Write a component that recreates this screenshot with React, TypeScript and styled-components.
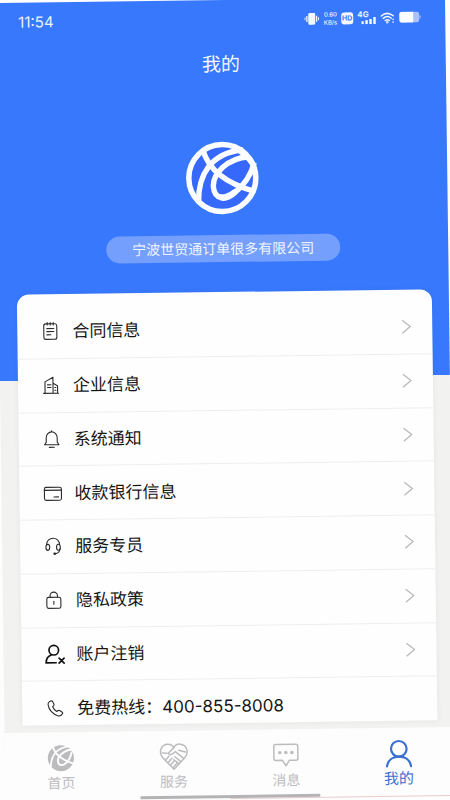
import React from "react";
import styled, { createGlobalStyle } from "styled-components";

const GlobalStyle = createGlobalStyle`
  *, *::before, *::after { box-sizing: border-box; }
  html, body { margin: 0; background: #fdfdfe; }
  body { font-family: "Inter", "Noto Sans CJK SC", sans-serif; color: #161616; }
  button { font: inherit; color: inherit; background: none; border: 0; padding: 0; margin: 0; cursor: pointer; }
  a { color: inherit; text-decoration: none; }
`;

const Viewport = styled.div`
  min-height: 100vh;
  overflow: hidden;
`;

/* The device screen lies slightly tilted on the white page. */
const Screen = styled.div`
  display: flex;
  flex-direction: column;
  width: 100%;
  height: calc(100vh - 1px);
  min-height: 640px;
  background: linear-gradient(#3778fd 378px, #f2f2f1 378px);
  transform: translate(-5px, 3px) rotate(-0.75deg);
  transform-origin: top left;
`;

const StatusBar = styled.header`
  display: flex;
  align-items: center;
  justify-content: space-between;
  height: 39px;
  padding: 0 24px 0 23px;
  color: #eef3ff;
`;

const Clock = styled.time`
  font-size: 15px;
  line-height: 20px;
`;

const StatusIcons = styled.div`
  display: flex;
  align-items: center;
  gap: 4px;
`;

const NetSpeed = styled.span`
  display: flex;
  flex-direction: column;
  align-items: center;
  font-size: 6px;
  line-height: 8px;
  font-weight: 500;
`;

const Title = styled.h1`
  margin: 0;
  padding-top: 12px;
  font-size: 19px;
  line-height: 28px;
  font-weight: 400;
  text-align: center;
  color: #f4f7ff;
`;

const Profile = styled.section`
  display: flex;
  flex-direction: column;
  align-items: center;
  gap: 20px;
  padding: 62px 0 30px;
`;

const Company = styled.p`
  margin: 0;
  padding: 0 26px;
  border-radius: 14px;
  background: #759ffc;
  color: #eff4ff;
  font-size: 14px;
  line-height: 27px;
`;

const Card = styled.main`
  flex: 1;
  display: flex;
  flex-direction: column;
  min-height: 0;
  margin: 0 17px 7px 18px;
  padding-top: 11px;
  border-radius: 12px 12px 0 0;
  background: #fefefe;
  box-shadow: 0 0 5px rgba(70, 70, 80, 0.08);
  overflow: hidden;
`;

/* The last row runs on below the card's lower edge. */
const List = styled.ul`
  flex: 1;
  display: grid;
  grid-auto-rows: 1fr;
  margin: 0 0 -10px;
  padding: 0;
  list-style: none;
`;

const Item = styled.li`
  display: flex;
  border-bottom: 1px solid #eeeeef;
`;

const RowButton = styled.button`
  flex: 1;
  display: flex;
  align-items: center;
  padding: 0 21px 0 22px;
  text-align: left;
  font-size: 17px;
  line-height: 24px;
`;

const RowIcon = styled.svg`
  flex: none;
  width: 22px;
  height: 22px;
  margin-right: 11px;
  fill: none;
  stroke: #2b2b2b;
  stroke-width: 1.1;
  stroke-linecap: round;
  stroke-linejoin: round;
`;

const RowLabel = styled.span`
  flex: 1;
  white-space: nowrap;
`;

const Chevron = styled.svg`
  flex: none;
  width: 10px;
  height: 16px;
  fill: none;
  stroke: #b9b9bb;
  stroke-width: 1.3;
`;

const TabBar = styled.nav`
  position: relative;
  display: grid;
  grid-template-columns: repeat(4, 1fr);
  height: 69px;
  padding-top: 11px;
  background: linear-gradient(#eccccd, #eccccd) bottom right / 50% 1px no-repeat #fdfdfe;
`;

const Tab = styled.a<{ $active?: boolean }>`
  display: flex;
  flex-direction: column;
  align-items: center;
  font-size: ${(p) => (p.$active ? 15 : 14)}px;
  line-height: 19px;
  color: ${(p) => (p.$active ? "#3a70cf" : "#bcbcbe")};

  svg {
    width: 30px;
    height: 30px;
    fill: none;
    stroke: currentColor;
    stroke-width: 1.5;
    stroke-linecap: round;
    stroke-linejoin: round;
  }
`;

const HomeIndicator = styled.span`
  position: absolute;
  left: 50%;
  bottom: 1px;
  width: 180px;
  height: 3px;
  margin-left: -90px;
  border-radius: 1px;
  background: #b4b4b6;
`;

const GlobeLines = () => (
  <>
    <path d="M13 60C13 34 25 12 58 9" />
    <path d="M18 9C23 27 38 42 70 51" />
  </>
);

const Logo = () => (
  <svg width="74" height="74" viewBox="0 0 74 74" role="img" aria-label="世贸通">
    <circle cx="37" cy="37" r="33.500" fill="#3568fb" stroke="#fafcff" strokeWidth="5.500" />
    <g fill="none" stroke="#fafcff" strokeWidth="5.400">
      <GlobeLines />
      <path d="M64 16C42 17 27 33 28 46C29 58 40 60 49 52C59 44 66 34 69 22" />
      <path d="M50 7Q61 13 68 24" />
    </g>
    <path d="M29 50Q36 57 47 49L55 45Q46 60 38 60Q31 59 29 50Z" fill="#fafcff" />
  </svg>
);

const HdBadge = styled.span`
  width: 12px;
  border-radius: 3px;
  background: #f4f7ff;
  color: #3778fd;
  font-size: 7px;
  line-height: 12px;
  font-weight: 700;
  text-align: center;
`;

const Signal = styled.span`
  display: flex;
  flex-direction: column;
  font-size: 8px;
  line-height: 7px;
  font-weight: 700;

  svg {
    margin: -1px 0 0 4px;
  }
`;

const StatusGlyphs = () => (
  <StatusIcons>
    <svg width="15" height="12" viewBox="0 0 15 12" fill="#f4f7ff" aria-hidden="true">
      <rect x="4" y="0" width="7" height="12" rx="1.5" />
      <path d="M2 3h1.3v6H2zM11.7 3H13v6h-1.3zM.2 4.6h1v2.8h-1zM13.8 4.6h1v2.8h-1z" />
    </svg>
    <NetSpeed>
      <span>0.60</span>
      <span>KB/s</span>
    </NetSpeed>
    <HdBadge>HD</HdBadge>
    <Signal>
      <span>4G</span>
      <svg width="15" height="7" viewBox="0 0 15 7" fill="#f4f7ff" aria-hidden="true">
        <path d="M0 4h2.500v3H0zM4 3h2.500v4H4zM8 2h2.500v5H8zM12 0h2.500v7H12z" />
      </svg>
    </Signal>
    <svg width="15" height="12" viewBox="0 0 15 12" fill="none" stroke="#f4f7ff" strokeWidth="1.5" strokeLinecap="round" aria-hidden="true">
      <path d="M1 4Q7-1 13 4M3 6.4Q7 3 11 6.4M5 8.6q2-1.6 4 0" />
      <circle cx="7" cy="10.4" r=".5" />
      <path d="M12.8 7.4v.2M12.8 10.2v.2" />
    </svg>
    <svg width="22" height="11" viewBox="0 0 22 11" aria-hidden="true">
      <rect width="20" height="11" rx="3" fill="#a9c2fd" />
      <path d="M3 0h11v11H3a3 3 0 0 1-3-3V3a3 3 0 0 1 3-3z" fill="#fafcff" />
      <path d="M20.400 3.500q1.200.5 1.200 2t-1.200 2z" fill="#a9c2fd" />
    </svg>
  </StatusIcons>
);

const rows: { label: string; icon: React.ReactNode; link?: boolean }[] = [
  {
    label: "合同信息",
    link: true,
    icon: (
      <>
        <rect x="4.5" y="3.5" width="13" height="15.5" rx="2" />
        <path d="M8 2.3v2.4M11 2.3v2.4M14 2.3v2.4M7.5 8.3h7M7.5 11.3h7M7.5 14.5h4" />
      </>
    ),
  },
  {
    label: "企业信息",
    link: true,
    icon: (
      <path d="M3.500 19h15M5 19V7.500L13 3v16M13 9l4.500 2.500V19M7.500 10.500h3.500M7.500 13.200h3.500M14.800 13.300h1M14.800 16h1" />
    ),
  },
  {
    label: "系统通知",
    link: true,
    icon: (
      <path d="M11 2.500v1M5.500 14V9.300a5.500 5.700 0 0 1 11 0V14l1.700 2.400H3.800zM8.500 19h5" />
    ),
  },
  {
    label: "收款银行信息",
    link: true,
    icon: (
      <>
        <rect x="3" y="5" width="17" height="13" rx="1.8" />
        <path d="M3 8h17M12.5 14.7H17" />
      </>
    ),
  },
  {
    label: "服务专员",
    link: true,
    icon: (
      <>
        <path d="M4.500 9.500C4.500 .8 17.500 .8 17.500 9.500M17.900 13.500c-.4 2.900-2 4.500-4.500 4.900" />
        <ellipse cx="5.700" cy="12" rx="1.900" ry="3" />
        <ellipse cx="16.300" cy="12" rx="1.900" ry="3" />
        <ellipse cx="12.600" cy="18.500" rx="1" ry=".6" fill="#2b2b2b" />
      </>
    ),
  },
  {
    label: "隐私政策",
    link: true,
    icon: (
      <>
        <rect x="4" y="8" width="14" height="11" rx="1.8" />
        <path d="M7.3 8V6.5a3.7 3.7 0 0 1 7.4 0V8M11 12v3" />
      </>
    ),
  },
  {
    label: "账户注销",
    link: true,
    icon: (
      <g stroke="#111" strokeWidth="1.7">
        <circle cx="10.3" cy="6.9" r="4.8" />
        <path d="M8 11.400C4.300 12.700 2.500 15.400 2.500 19.500H12.500M15.500 15l5 5M20.500 15l-5 5" />
      </g>
    ),
  },
  {
    label: "免费热线：400-855-8008",
    icon: (
      <path d="M5.200 4.300L7.200 3.500Q8 3.400 8.400 4.200L9.800 7Q10 7.800 9.300 8.500L8.400 9.500Q9.600 12.500 12.500 14.300L13.900 13.300Q14.600 12.900 15.400 13.300L18 15Q18.700 15.600 18.300 16.400C17.400 18.200 15.900 19 14 18.700C8.500 17.200 4.500 12.500 3.900 7.300C3.800 6 4.200 4.900 5.200 4.300Z" />
    ),
  },
];

const HomeIcon = () => (
  <svg viewBox="2 2 70 70" aria-hidden="true">
    <circle cx="37" cy="37" r="30.500" fill="currentColor" stroke="none" />
    <g stroke="#fdfdfe" strokeWidth="4.500">
      <GlobeLines />
      <path d="M66 17C44 17 30 32 30 43C30 54 40 56 48 49C57 42 60 34 62 24" />
      <path d="M56 66Q61 59 72 54" />
    </g>
  </svg>
);

const ServiceIcon = () => (
  <svg viewBox="0 0 30 30" aria-hidden="true">
    <path d="M15 27.500L4 16C-.5 11 2 3 8.500 2.500C11.500 2.300 14 4 15 6C16 4 18.500 2.300 21.500 2.500C28 3 30.500 11 26 16Z" />
    <path d="M15 6L9.500 11.500Q11 14 14 12L16.500 10L25 17M3.500 11L8 11.500M26.500 10.500L20 8.500M6.500 18.500L10 14.500M9 21L13 16.500M11.500 23.500L15.500 19M14 26L18 21.500M16 15L22 20M15 18L20 22" />
  </svg>
);

const MessageIcon = () => (
  <svg viewBox="0 0 30 30" aria-hidden="true">
    <path d="M5 4H25Q27 4 27 6V18Q27 20 25 20H18.500L15 25.500L11.500 20H5Q3 20 3 18V6Q3 4 5 4Z" />
    <path d="M9 12.300h.1M15 12.300h.1M21 12.300h.1" strokeWidth="3.400" />
  </svg>
);

const MineIcon = () => (
  <svg viewBox="0 0 30 30" aria-hidden="true">
    <g strokeWidth="2.200">
      <circle cx="15" cy="10" r="7.800" />
      <path d="M3 27.500C4 21 9 17.900 15 17.900S26 21 27 27.500" />
    </g>
  </svg>
);

const tabs = [
  { label: "首页", Icon: HomeIcon },
  { label: "服务", Icon: ServiceIcon },
  { label: "消息", Icon: MessageIcon },
  { label: "我的", Icon: MineIcon, active: true },
];

export default function App() {
  return (
    <Viewport>
      <GlobalStyle />
      <Screen lang="zh-CN">
        <StatusBar>
          <Clock>11:54</Clock>
          <StatusGlyphs />
        </StatusBar>
        <Title>我的</Title>
        <Profile>
          <Logo />
          <Company>宁波世贸通订单很多有限公司</Company>
        </Profile>
        <Card>
          <List>
            {rows.map((row) => (
              <Item key={row.label}>
                <RowButton type="button">
                  <RowIcon viewBox="0 0 22 22" aria-hidden="true">
                    {row.icon}
                  </RowIcon>
                  <RowLabel>{row.label}</RowLabel>
                  {row.link && (
                    <Chevron viewBox="0 0 10 16" aria-hidden="true">
                      <path d="M1 1.500L9 8L1 14.500" />
                    </Chevron>
                  )}
                </RowButton>
              </Item>
            ))}
          </List>
        </Card>
        <TabBar>
          {tabs.map(({ label, Icon, active }) => (
            <Tab key={label} href="#" $active={active} aria-current={active ? "page" : undefined}>
              <Icon />
              <span>{label}</span>
            </Tab>
          ))}
          <HomeIndicator />
        </TabBar>
      </Screen>
    </Viewport>
  );
}
